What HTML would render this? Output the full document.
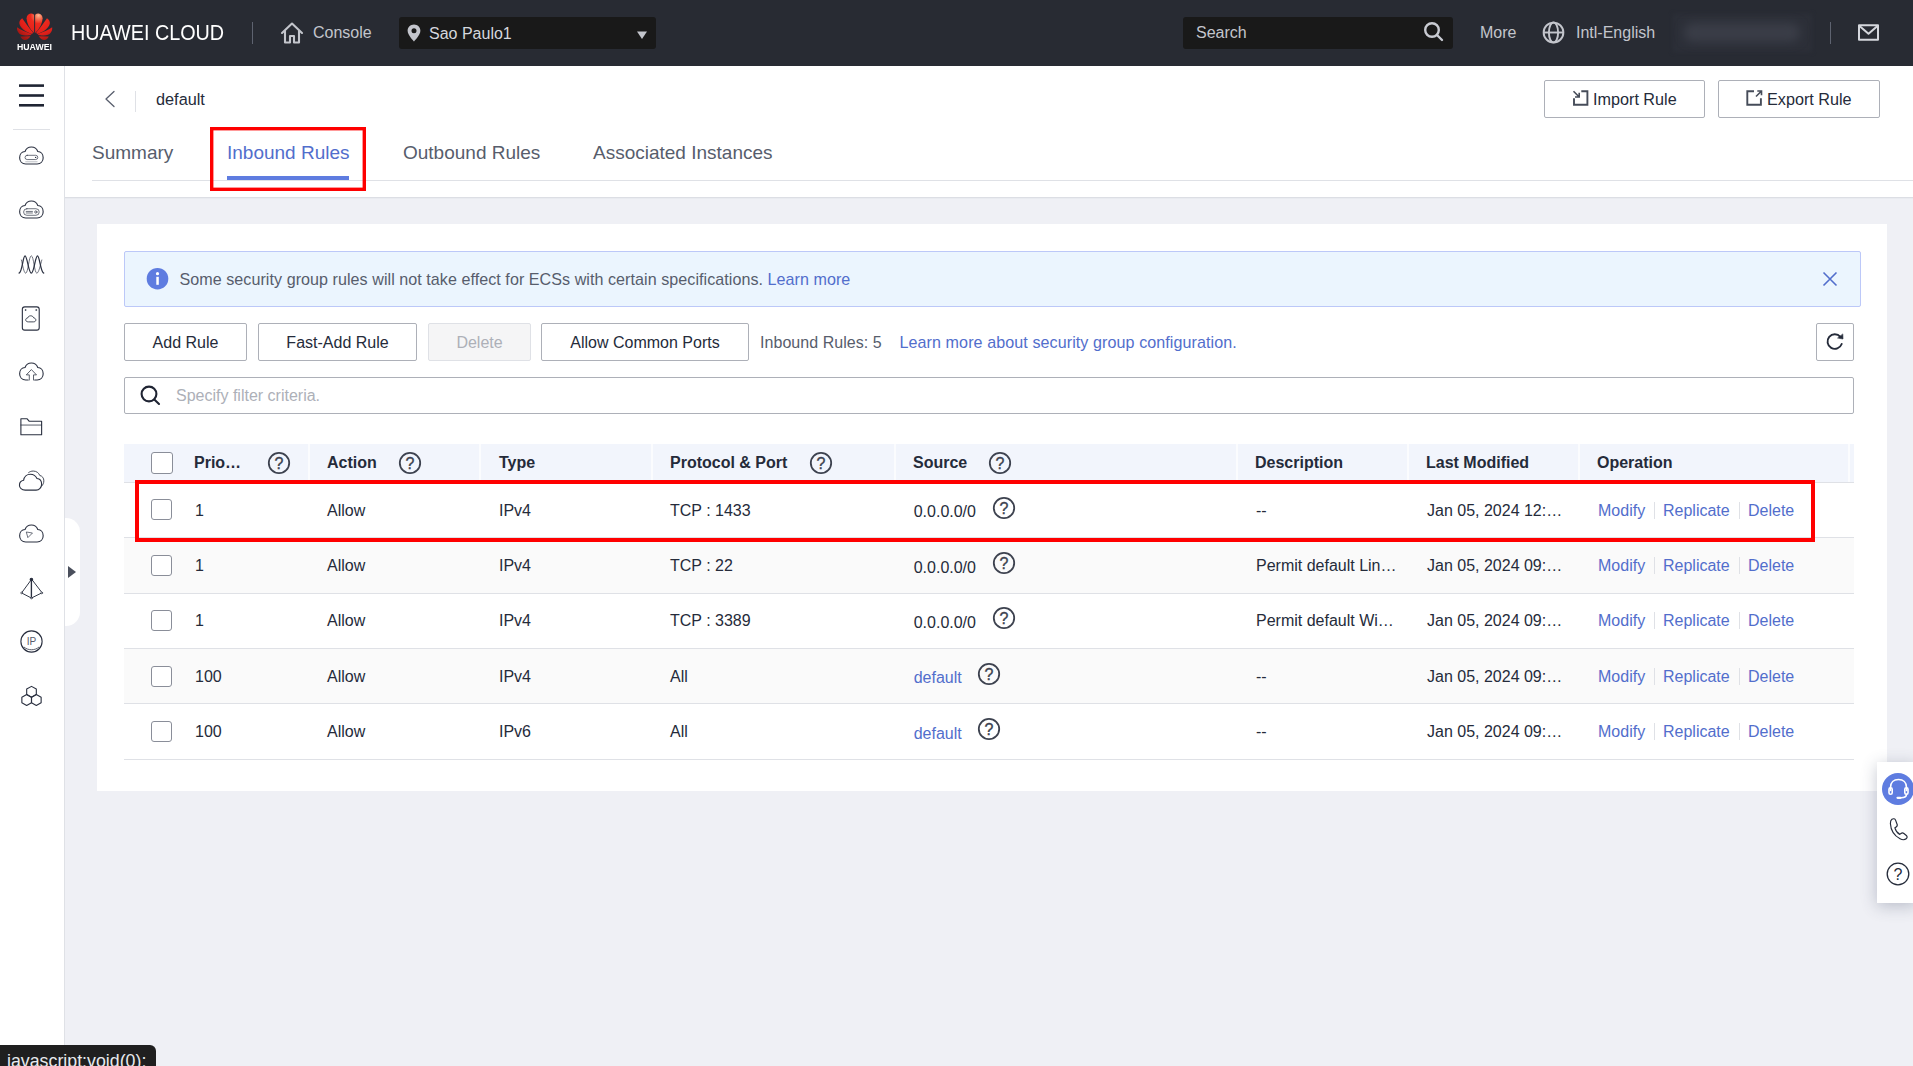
<!DOCTYPE html>
<html lang="en">
<head>
<meta charset="utf-8">
<title>Security Group - Inbound Rules</title>
<style>
*{box-sizing:border-box;margin:0;padding:0}
html,body{width:1913px;height:1066px;overflow:hidden}
body{font-family:"Liberation Sans",Arial,sans-serif;font-size:16px;color:#252b3a;background:#eff0f5;position:relative}
.abs{position:absolute}
.t{position:absolute;white-space:nowrap;line-height:20px}
a{color:#526ecc;text-decoration:none}
/* top bar */
#top{position:absolute;left:0;top:0;width:1913px;height:66px;background:#282b33}
#top .t{color:#c3c5cc}
.darkbox{position:absolute;background:#191919;border-radius:3px}
/* sidebar */
#side{position:absolute;left:0;top:66px;width:65px;height:1000px;background:#fff;border-right:1px solid #dfe1e6}
#side svg{position:absolute;left:17.600px;width:27px;height:27px;fill:none;stroke:#2a3040;stroke-width:1.15;stroke-linecap:round;stroke-linejoin:round}
/* header */
#head{position:absolute;left:65px;top:66px;width:1848px;height:131px;background:#fff;box-shadow:0 1px 0 #dcdee4,0 2px 0 #e9ebf0}
.btn{position:absolute;height:38px;border:1px solid #adb0b8;border-radius:2px;background:#fff;color:#252b3a;font-size:16px;line-height:38px;text-align:center;white-space:nowrap}
.btn.dis{background:#f5f5f6;border-color:#dfe1e6;color:#adb0b8}
.tab{position:absolute;top:142px;font-size:19px;line-height:22px;color:#575d6c;white-space:nowrap}
/* card */
#card{position:absolute;left:97px;top:224px;width:1790px;height:567px;background:#fff}
#alert{position:absolute;left:124px;top:251px;width:1737px;height:56px;background:#ebf5fe;border:1px solid #bcc8f8;border-radius:2px}
/* table */
#thead{position:absolute;left:124px;top:444px;width:1730px;height:38px;background:#f2f5fc}
.th{position:absolute;top:453px;font-weight:bold;color:#252b3a;white-space:nowrap;line-height:20px}
.sep{position:absolute;top:444px;width:2px;height:38px;background:#fbfcfe}
.row{position:absolute;left:124px;width:1730px;border-bottom:1px solid #dfe1e6}
.row.odd{background:#fafafa}
.cb{position:absolute;left:151px;width:22px;height:22px;border:1px solid #8a8e99;border-radius:3px;background:#fff}
.c{position:absolute;white-space:nowrap;line-height:20px;color:#252b3a}
.q{position:absolute;width:24px;height:24px}
.q circle{fill:none;stroke:#3d424f;stroke-width:1.8}
.q text{font-family:"Liberation Sans",Arial,sans-serif;font-size:16px;fill:#3d424f;stroke:#3d424f;stroke-width:0.35;text-anchor:middle}
.vs{position:absolute;width:1px;height:17px;background:#dfe1e6;margin-top:1px}
.redbox{position:absolute;border:3px solid #f00;pointer-events:none}
</style>
</head>
<body>

<!-- TOPBAR -->
<div id="top">
  <!-- Huawei logo -->
  <svg class="abs" style="left:14px;top:10px;width:42px;height:32px" viewBox="14 10 42 32">
    <defs>
      <radialGradient id="hg" gradientUnits="userSpaceOnUse" cx="38.500" cy="15.500" r="27"><stop offset="0" stop-color="#fbb892"/><stop offset="0.120" stop-color="#f67a5a"/><stop offset="0.300" stop-color="#ee2a1e"/><stop offset="0.700" stop-color="#e01f19"/><stop offset="1" stop-color="#9c1713"/></radialGradient>
    </defs>
    <g fill="url(#hg)"><path d="M 34.1 33 L 34.1 15.6 C 34.1 14.3 32.6 13.3 30.7 13.5 C 28.4 13.8 26.6 15.6 26.6 18.2 C 26.8 23.5 30 29.2 34.1 33 Z"/><path d="M 22.2 18.2 C 20 19.6 19 21.6 19.4 23.8 C 20.5 28.6 26 32.2 32.2 33.9 L 33 32.6 C 29 28 25 22.2 22.2 18.2 Z"/><path d="M 17 27.3 C 16.7 30 17.7 32.3 19.6 33.9 C 22 35.4 27 35.6 30.4 35.3 L 31.6 34.1 C 26 32.1 21 29.9 17 27.3 Z"/><path d="M 20.4 36.5 L 30.4 36.2 C 29 38.6 27 39.9 25 40 C 23 40 21.2 38.4 20.4 36.5 Z"/><path d="M 35.10 33 L 35.10 15.6 C 35.10 14.3 36.60 13.3 38.50 13.5 C 40.80 13.8 42.60 15.6 42.60 18.2 C 42.40 23.5 39.20 29.2 35.10 33 Z"/><path d="M 47.00 18.2 C 49.20 19.6 50.20 21.6 49.80 23.8 C 48.70 28.6 43.20 32.2 37.00 33.9 L 36.20 32.6 C 40.20 28 44.20 22.2 47.00 18.2 Z"/><path d="M 52.20 27.3 C 52.50 30 51.50 32.3 49.60 33.9 C 47.20 35.4 42.20 35.6 38.80 35.3 L 37.60 34.1 C 43.20 32.1 48.20 29.9 52.20 27.3 Z"/><path d="M 48.80 36.5 L 38.80 36.2 C 40.20 38.6 42.20 39.9 44.20 40 C 46.20 40 48.00 38.4 48.80 36.5 Z"/></g>
  </svg>
  <div class="t" style="left:17px;top:41px;font-size:9.300px;font-weight:bold;color:#fff;line-height:12px;transform:scaleX(0.940);transform-origin:0 0">HUAWEI</div>
  <div class="t" style="left:71px;top:21px;font-size:19.8px;line-height:24px;color:#fff;transform:scaleY(1.080);transform-origin:0 19px">HUAWEI CLOUD</div>
  <div class="abs" style="left:252px;top:22px;width:1px;height:22px;background:#5e6370"></div>
  <svg class="abs" style="left:280px;top:21px;width:24px;height:24px" viewBox="0 0 24 24" fill="none" stroke="#c3c5cc" stroke-width="2.100" stroke-linejoin="round" stroke-linecap="round"><path d="M2 12 L12 2.500 L22 12"/><path d="M5 10 V21.500 H10 V15 H14 V21.500 H19 V10"/></svg>
  <div class="t" style="left:313px;top:23px">Console</div>
  <div class="darkbox" style="left:399px;top:17px;width:257px;height:32px"></div>
  <svg class="abs" style="left:407px;top:24px;width:14px;height:18px" viewBox="0 0 14 18"><path d="M7 0.500 C3.400 0.500 0.600 3.300 0.600 6.800 C0.600 11 7 17.500 7 17.500 C7 17.500 13.400 11 13.400 6.800 C13.400 3.300 10.600 0.500 7 0.500 Z M7 4.300 A2.500 2.500 0 1 1 7 9.300 A2.500 2.500 0 1 1 7 4.300 Z" fill="#c3c5cc" fill-rule="evenodd"/></svg>
  <div class="t" style="left:429px;top:24px;color:#d5d7dd">Sao Paulo1</div>
  <svg class="abs" style="left:637px;top:30.600px;width:10px;height:8px" viewBox="0 0 10 8"><path d="M0 0.500 H10 L5 8 Z" fill="#c3c5cc"/></svg>

  <div class="darkbox" style="left:1183px;top:17px;width:270px;height:32px"></div>
  <div class="t" style="left:1196px;top:23px">Search</div>
  <svg class="abs" style="left:1423px;top:21px;width:22px;height:22px" viewBox="0 0 22 22" fill="none" stroke="#c9cbd2" stroke-width="2.400" stroke-linecap="round"><circle cx="9" cy="9" r="6.800"/><path d="M14 14 L19 19"/></svg>
  <div class="t" style="left:1480px;top:23px">More</div>
  <svg class="abs" style="left:1542px;top:21px;width:23px;height:23px" viewBox="0 0 24 24" fill="none" stroke="#c3c5cc" stroke-width="2"><circle cx="12" cy="12" r="10.300"/><ellipse cx="12" cy="12" rx="4.800" ry="10.500"/><path d="M1.500 12 H22.500"/></svg>
  <div class="t" style="left:1576px;top:23px">Intl-English</div>
  <div class="abs" style="left:1673px;top:14px;width:139px;height:38px;background:#2c2f38;filter:blur(2px)"></div>
  <div class="abs" style="left:1684px;top:23px;width:116px;height:19px;border-radius:9px;background:#3a3d47;filter:blur(5px)"></div>
  <div class="abs" style="left:1830px;top:22px;width:1px;height:22px;background:#5e6370"></div>
  <svg class="abs" style="left:1857px;top:23px;width:23px;height:19px" viewBox="0 0 23 19" fill="none" stroke="#d5d7dd" stroke-width="2" stroke-linejoin="round"><rect x="2" y="2.200" width="19" height="14.500"/><path d="M2.500 3 L11.500 10.800 L20.500 3"/></svg>
</div>

<!-- SIDEBAR -->
<div id="side">
  <svg style="left:19px;top:17px;width:25px;height:25px;stroke:none" viewBox="0 0 25 25"><rect x="0" y="1.300" width="25" height="2.600" fill="#1f2433"/><rect x="0" y="11.200" width="25" height="2.600" fill="#1f2433"/><rect x="0" y="21" width="25" height="2.600" fill="#1f2433"/></svg>
  <div class="abs" style="left:13px;top:63px;width:37px;height:1px;background:#dfe1e6"></div>
  <!-- ECS -->
  <svg style="top:76px" viewBox="0 0 28 28"><path d="M8 22.800 C4.200 22.800 1.700 20 1.700 16.300 C1.700 12.800 4 10 7.300 9.800 C8.300 7 10.800 5.200 13.900 5.200 C17 5.200 19.500 7 20.500 9.800 C23.800 10 26.100 12.800 26.100 16.300 C26.100 20 23.600 22.800 19.800 22.800 Z"/><rect x="7.300" y="13.800" width="13.200" height="4.400" rx="2.200" stroke-width="0.700"/><circle cx="18.300" cy="16" r="0.700" fill="#252b3a" stroke="none"/><path d="M8 20.500 H19.800" stroke-width="0.600" stroke="#8a8e99"/></svg>
  <!-- BMS -->
  <svg style="top:130px" viewBox="0 0 28 28"><path d="M8 22.800 C4.200 22.800 1.700 20 1.700 16.300 C1.700 12.800 4 10 7.300 9.800 C8.300 7 10.800 5.200 13.900 5.200 C17 5.200 19.500 7 20.500 9.800 C23.800 10 26.100 12.800 26.100 16.300 C26.100 20 23.600 22.800 19.800 22.800 Z"/><rect x="5.800" y="13.200" width="16.200" height="6.800" rx="3.400" stroke-width="0.700"/><path d="M8.500 16 H15 M8.500 17.600 H15" stroke-width="0.700"/><circle cx="18.500" cy="16.600" r="1.200" stroke-width="0.700"/></svg>
  <!-- AS -->
  <svg style="top:184.5px" viewBox="0 0 28 28"><path d="M1.100 23 C4.500 22 5 5 7.300 5 C9.600 5 11 23 13.800 23 C16.600 23 17.900 5 20.200 5 C22.500 5 23.300 22 26.700 23" stroke-width="1.300"/><path d="M3.500 9.300 C4.800 14 6 23 8 23 C10.500 23 11.300 5 13.800 5 C16.300 5 17 23 19.500 23 C21.500 23 23.400 14 24.700 9.300" stroke-width="0.700"/></svg>
  <!-- EVS -->
  <svg style="top:238.5px" viewBox="0 0 28 28"><rect x="4.500" y="2" width="17.500" height="24" rx="2.500"/><circle cx="7.700" cy="5.200" r="0.500" fill="#252b3a" stroke-width="0.600"/><circle cx="18.800" cy="5.200" r="0.500" fill="#252b3a" stroke-width="0.600"/><path d="M10.500 17.500 C8.800 17.500 8 16.500 8 15.400 C8 14.300 8.900 13.500 10 13.500 C10.400 12 11.700 11.200 13.200 11.200 C14.800 11.200 16 12.200 16.400 13.500 C17.600 13.600 18.500 14.400 18.500 15.500 C18.500 16.700 17.600 17.500 16.300 17.500 Z" stroke-width="0.900"/></svg>
  <!-- CBR -->
  <svg style="top:292px" viewBox="0 0 28 28"><path d="M10.500 22.800 H8 C4.200 22.800 1.700 20 1.700 16.300 C1.700 12.800 4 10 7.300 9.800 C8.300 7 10.800 5.200 13.900 5.200 C17 5.200 19.500 7 20.500 9.800 C23.800 10 26.100 12.800 26.100 16.300 C26.100 20 23.600 22.800 19.800 22.800 H17.300"/><path d="M11.700 22.800 V17.500 H8.600 L13.900 12 L19.200 17.500 H16.100 V22.800" stroke-width="0.800"/></svg>
  <!-- OBS -->
  <svg style="top:346.5px" viewBox="0 0 28 28"><path d="M3 6 H9.500 L11.500 8.500 H24.500 V22.500 H3 Z"/><path d="M3 12.500 H24.500" stroke-width="0.800"/></svg>
  <!-- VPC -->
  <svg style="top:400.5px" viewBox="0 0 28 28"><path d="M7.500 24 C3.800 24 1.500 21.500 1.500 18.800 C1.500 16.200 3.300 14.300 5.800 13.800 C6.300 10 9.300 7.500 12.800 7.500 C16 7.500 18.500 9.300 19.700 12 C22.600 12.300 24.500 14.700 24.500 17.800 C24.500 21.300 22 24 18.800 24 Z"/><path d="M11 5.800 C12.300 4.800 13.800 4.200 15.800 4.200 C19 4.200 21.500 6 22.600 8.800 C25.200 9.300 26.800 11.500 26.800 14.300 C26.800 16.500 26 18.300 24.800 19.500" stroke-width="0.900"/></svg>
  <!-- ELB / media -->
  <svg style="top:454px" viewBox="0 0 28 28"><path d="M8 22.800 C4.200 22.800 1.700 20 1.700 16.300 C1.700 12.800 4 10 7.300 9.800 C8.300 7 10.800 5.200 13.900 5.200 C17 5.200 19.500 7 20.500 9.800 C23.800 10 26.100 12.800 26.100 16.300 C26.100 20 23.600 22.800 19.800 22.800 Z"/><path d="M9 12.500 L15 13.500 L10.500 18 Z" stroke-width="0.700"/></svg>
  <!-- pyramid -->
  <svg style="top:508.5px" viewBox="0 0 28 28"><path d="M13.900 4.700 L3.700 18.600 L13.900 23.900 L24.600 18.600 Z" stroke-width="1"/><path d="M13.900 4.700 V23.900" stroke-width="1.400"/><circle cx="13.900" cy="4.700" r="1.300" fill="#252b3a"/><circle cx="3.700" cy="18.600" r="0.900" fill="#fff" stroke-width="0.700"/><circle cx="24.600" cy="18.600" r="0.900" fill="#fff" stroke-width="0.700"/><circle cx="13.900" cy="23.900" r="0.900" fill="#fff" stroke-width="0.700"/></svg>
  <!-- EIP -->
  <svg style="top:561.5px" viewBox="0 0 28 28"><circle cx="14" cy="14" r="11"/><path d="M6.500 20 C10.500 23.500 17.500 23.500 21.500 20" stroke-width="0.800"/><text x="14" y="17.500" text-anchor="middle" font-family="Liberation Sans, Arial, sans-serif" font-size="10.500" fill="#575d6c" stroke="none">IP</text></svg>
  <!-- hexagons -->
  <svg style="top:616.5px" viewBox="0 0 28 28"><path d="M14 3.500 L19 6.300 V12 L14 14.800 L9 12 V6.300 Z"/><path d="M9 12 L14 14.800 V20.500 L9 23.300 L4 20.500 V14.800 Z"/><path d="M19 12 L24 14.800 V20.500 L19 23.300 L14 20.500 V14.800 Z"/></svg>
</div>
<div class="abs" style="left:65px;top:518px;width:15px;height:108px;background:#fff;border-radius:0 14px 14px 0"></div>
<svg class="abs" style="left:68px;top:566px;width:8px;height:12px" viewBox="0 0 8 12"><path d="M0 0 L8 6 L0 12 Z" fill="#4a4f5c"/></svg>

<!-- HEADER -->
<div id="head"></div>
<svg class="abs" style="left:104px;top:90px;width:12px;height:18px" viewBox="0 0 12 18" fill="none" stroke="#575d6c" stroke-width="1.300" stroke-linecap="round" stroke-linejoin="round"><path d="M10 1.500 L2 9 L10 16.500"/></svg>
<div class="abs" style="left:135px;top:91px;width:1px;height:21px;background:#dfe1e6"></div>
<div class="t" style="left:156px;top:89px;font-size:16.300px;color:#252b3a">default</div>
<div class="btn" style="left:1544px;top:80px;width:161px"></div>
<svg class="abs" style="left:1572px;top:90px;width:17px;height:16px" viewBox="0 0 17 16" fill="none" stroke="#464c59" stroke-width="1.900"><path d="M9.300 1.300 H15.400 V14.700 H2 V8.200"/><path d="M1.500 1.300 L7 6.800 M7.200 2.800 V7 H3" stroke-width="1.600"/></svg>
<div class="t" style="left:1593px;top:89px;font-size:16.200px">Import Rule</div>
<div class="btn" style="left:1718px;top:80px;width:162px"></div>
<svg class="abs" style="left:1746px;top:90px;width:17px;height:16px" viewBox="0 0 17 16" fill="none" stroke="#464c59" stroke-width="1.900"><path d="M8 1.300 H1.300 V14.700 H14.900 V8.200"/><path d="M10 6.500 L15.300 1.200 M11.300 1 H15.500 V5.200" stroke-width="1.600"/></svg>
<div class="t" style="left:1767px;top:89px;font-size:16.200px">Export Rule</div>
<div class="abs" style="left:92px;top:180px;width:1821px;height:1px;background:#dfe1e6"></div>
<div class="tab" style="left:92px">Summary</div>
<div class="tab" style="left:227px;color:#526ecc">Inbound Rules</div>
<div class="abs" style="left:227px;top:176px;width:122px;height:4px;background:#5e7ce0"></div>
<div class="tab" style="left:403px">Outbound Rules</div>
<div class="tab" style="left:593px">Associated Instances</div>
<svg class="abs" style="left:210px;top:127px;width:156px;height:64px" viewBox="0 0 156 64"><rect x="1.700" y="1.700" width="152.600" height="60.600" fill="none" stroke="#fe0000" stroke-width="3.400"/></svg>

<!-- CARD -->
<div id="card"></div>
<div id="alert"></div>
<svg class="abs" style="left:146px;top:267.400px;width:23px;height:23px" viewBox="0 0 23 23"><circle cx="11.500" cy="11.700" r="10.800" fill="#5e7ce0"/><rect x="10.300" y="9.800" width="2.500" height="8" fill="#fff"/><circle cx="11.500" cy="6.700" r="1.600" fill="#fff"/></svg>
<div class="t" style="left:179.500px;top:269px;font-size:16.100px;letter-spacing:0.050px;color:#575d6c">Some security group rules will not take effect for ECSs with certain specifications. <a>Learn more</a></div>
<svg class="abs" style="left:1822px;top:271px;width:16px;height:16px" viewBox="0 0 16 16" fill="none" stroke="#526ecc" stroke-width="1.600"><path d="M1.500 1.500 L14.500 14.500 M14.500 1.500 L1.500 14.500"/></svg>

<div class="btn" style="left:124px;top:323px;width:123px">Add Rule</div>
<div class="btn" style="left:258px;top:323px;width:159px">Fast-Add Rule</div>
<div class="btn dis" style="left:428px;top:323px;width:103px">Delete</div>
<div class="btn" style="left:541px;top:323px;width:208px">Allow Common Ports</div>
<div class="t" style="left:760px;top:333px;letter-spacing:0.05px;color:#575d6c">Inbound Rules: 5</div>
<div class="t" style="left:899.500px;top:332px;font-size:16.100px;letter-spacing:0.080px"><a>Learn more about security group configuration.</a></div>
<div class="btn" style="left:1816px;top:323px;width:38px"></div>
<svg class="abs" style="left:1824px;top:331px;width:22px;height:22px" viewBox="0 0 22 22" fill="none" stroke="#252b3a" stroke-width="1.700" stroke-linecap="round"><path d="M16.400 5.800 A7.300 7.300 0 1 0 17.700 13" stroke-width="1.900"/><path d="M18.800 3.300 L19 8 L13.900 7.100 Z" fill="#252b3a" stroke-width="0.600" stroke-linejoin="round"/></svg>

<div class="abs" style="left:124px;top:377px;width:1730px;height:37px;border:1px solid #adb0b8;border-radius:2px;background:#fff"></div>
<svg class="abs" style="left:139px;top:384px;width:23px;height:22px" viewBox="0 0 23 22" fill="none" stroke="#1f2433" stroke-width="2.100" stroke-linecap="round"><circle cx="10" cy="10" r="7.400"/><path d="M15.300 15.500 L20 20"/></svg>
<div class="t" style="left:176px;top:386px;color:#adb0b8">Specify filter criteria.</div>

<!-- TABLE -->
<div id="thead"></div>
<div class="abs" style="left:124px;top:482px;width:1730px;height:1px;background:#dfe1e6"></div>
<div class="sep" style="left:308px"></div>
<div class="sep" style="left:479px"></div>
<div class="sep" style="left:651px"></div>
<div class="sep" style="left:894px"></div>
<div class="sep" style="left:1236px"></div>
<div class="sep" style="left:1407px"></div>
<div class="sep" style="left:1578px"></div>
<div class="sep" style="left:1848px"></div>
<div class="cb" style="top:452px"></div>
<div class="th" style="left:194px">Prio…</div>
<div class="th" style="left:327px">Action</div>
<div class="th" style="left:499px">Type</div>
<div class="th" style="left:670px">Protocol &amp; Port</div>
<div class="th" style="left:913px">Source</div>
<div class="th" style="left:1255px">Description</div>
<div class="th" style="left:1426px">Last Modified</div>
<div class="th" style="left:1597px">Operation</div>
<svg class="q" style="left:266.5px;top:450.5px" viewBox="0 0 24 24"><circle cx="12" cy="12" r="10.200"/><text x="12" y="17.700">?</text></svg>
<svg class="q" style="left:397.5px;top:450.5px" viewBox="0 0 24 24"><circle cx="12" cy="12" r="10.200"/><text x="12" y="17.700">?</text></svg>
<svg class="q" style="left:809px;top:450.5px" viewBox="0 0 24 24"><circle cx="12" cy="12" r="10.200"/><text x="12" y="17.700">?</text></svg>
<svg class="q" style="left:988px;top:450.5px" viewBox="0 0 24 24"><circle cx="12" cy="12" r="10.200"/><text x="12" y="17.700">?</text></svg>
<div class="row" style="top:483px;height:55px"></div>
<div class="cb" style="top:499px;width:21px;height:21px"></div>
<div class="c" style="left:195px;top:501px">1</div>
<div class="c" style="left:327px;top:501px">Allow</div>
<div class="c" style="left:499px;top:501px">IPv4</div>
<div class="c" style="left:670px;top:501px">TCP : 1433</div>
<div class="c" style="left:913.700px;top:502px">0.0.0.0/0</div>
<svg class="q" style="left:992px;top:495.500px" viewBox="0 0 24 24"><circle cx="12" cy="12" r="10.200"/><text x="12" y="17.700">?</text></svg>
<div class="c" style="left:1256px;top:501px">--</div>
<div class="c" style="left:1427px;top:501px">Jan 05, 2024 12:…</div>
<div class="c" style="left:1598px;top:501px"><a>Modify</a></div>
<div class="vs" style="left:1654px;top:501px"></div>
<div class="c" style="left:1663px;top:501px"><a>Replicate</a></div>
<div class="vs" style="left:1739px;top:501px"></div>
<div class="c" style="left:1748px;top:501px"><a>Delete</a></div>
<div class="row odd" style="top:538px;height:56px"></div>
<div class="cb" style="top:555px;width:21px;height:21px"></div>
<div class="c" style="left:195px;top:556px">1</div>
<div class="c" style="left:327px;top:556px">Allow</div>
<div class="c" style="left:499px;top:556px">IPv4</div>
<div class="c" style="left:670px;top:556px">TCP : 22</div>
<div class="c" style="left:913.700px;top:558px">0.0.0.0/0</div>
<svg class="q" style="left:992px;top:551px" viewBox="0 0 24 24"><circle cx="12" cy="12" r="10.200"/><text x="12" y="17.700">?</text></svg>
<div class="c" style="left:1256px;top:556px">Permit default Lin…</div>
<div class="c" style="left:1427px;top:556px">Jan 05, 2024 09:…</div>
<div class="c" style="left:1598px;top:556px"><a>Modify</a></div>
<div class="vs" style="left:1654px;top:556px"></div>
<div class="c" style="left:1663px;top:556px"><a>Replicate</a></div>
<div class="vs" style="left:1739px;top:556px"></div>
<div class="c" style="left:1748px;top:556px"><a>Delete</a></div>
<div class="row" style="top:594px;height:55px"></div>
<div class="cb" style="top:610px;width:21px;height:21px"></div>
<div class="c" style="left:195px;top:611px">1</div>
<div class="c" style="left:327px;top:611px">Allow</div>
<div class="c" style="left:499px;top:611px">IPv4</div>
<div class="c" style="left:670px;top:611px">TCP : 3389</div>
<div class="c" style="left:913.700px;top:613px">0.0.0.0/0</div>
<svg class="q" style="left:992px;top:606px" viewBox="0 0 24 24"><circle cx="12" cy="12" r="10.200"/><text x="12" y="17.700">?</text></svg>
<div class="c" style="left:1256px;top:611px">Permit default Wi…</div>
<div class="c" style="left:1427px;top:611px">Jan 05, 2024 09:…</div>
<div class="c" style="left:1598px;top:611px"><a>Modify</a></div>
<div class="vs" style="left:1654px;top:611px"></div>
<div class="c" style="left:1663px;top:611px"><a>Replicate</a></div>
<div class="vs" style="left:1739px;top:611px"></div>
<div class="c" style="left:1748px;top:611px"><a>Delete</a></div>
<div class="row odd" style="top:649px;height:55px"></div>
<div class="cb" style="top:666px;width:21px;height:21px"></div>
<div class="c" style="left:195px;top:667px">100</div>
<div class="c" style="left:327px;top:667px">Allow</div>
<div class="c" style="left:499px;top:667px">IPv4</div>
<div class="c" style="left:670px;top:667px">All</div>
<div class="c" style="left:913.700px;top:668px"><a>default</a></div>
<svg class="q" style="left:977.300px;top:661.500px" viewBox="0 0 24 24"><circle cx="12" cy="12" r="10.200"/><text x="12" y="17.700">?</text></svg>
<div class="c" style="left:1256px;top:667px">--</div>
<div class="c" style="left:1427px;top:667px">Jan 05, 2024 09:…</div>
<div class="c" style="left:1598px;top:667px"><a>Modify</a></div>
<div class="vs" style="left:1654px;top:667px"></div>
<div class="c" style="left:1663px;top:667px"><a>Replicate</a></div>
<div class="vs" style="left:1739px;top:667px"></div>
<div class="c" style="left:1748px;top:667px"><a>Delete</a></div>
<div class="row" style="top:704px;height:56px"></div>
<div class="cb" style="top:721px;width:21px;height:21px"></div>
<div class="c" style="left:195px;top:722px">100</div>
<div class="c" style="left:327px;top:722px">Allow</div>
<div class="c" style="left:499px;top:722px">IPv6</div>
<div class="c" style="left:670px;top:722px">All</div>
<div class="c" style="left:913.700px;top:724px"><a>default</a></div>
<svg class="q" style="left:977.300px;top:717px" viewBox="0 0 24 24"><circle cx="12" cy="12" r="10.200"/><text x="12" y="17.700">?</text></svg>
<div class="c" style="left:1256px;top:722px">--</div>
<div class="c" style="left:1427px;top:722px">Jan 05, 2024 09:…</div>
<div class="c" style="left:1598px;top:722px"><a>Modify</a></div>
<div class="vs" style="left:1654px;top:722px"></div>
<div class="c" style="left:1663px;top:722px"><a>Replicate</a></div>
<div class="vs" style="left:1739px;top:722px"></div>
<div class="c" style="left:1748px;top:722px"><a>Delete</a></div>
<div class="redbox" style="left:135px;top:480px;width:1680px;height:62px;border-width:4px"></div>

<!-- FLOATERS -->
<div class="abs" style="left:1877px;top:762px;width:40px;height:141px;background:#fff;box-shadow:0 3px 16px rgba(60,70,100,.30)"></div>
<svg class="abs" style="left:1882px;top:773px;width:32px;height:32px" viewBox="0 0 32 32"><circle cx="16" cy="16" r="16" fill="#5e7ce0"/><g fill="none" stroke="#fff" stroke-width="1.600" stroke-linecap="round"><path d="M8.500 17.500 V14.500 C8.500 9.500 11.800 6.500 16.500 6.500 C21.200 6.500 24.500 9.500 24.500 14.500 V17.500"/><rect x="7" y="14.800" width="3.200" height="6.500" rx="1.500"/><rect x="22.800" y="14.800" width="3.200" height="6.500" rx="1.500"/><path d="M24.500 21.300 C24.500 23.800 22.500 24.800 19 24.800"/><path d="M15.500 24.800 H18.500" stroke-width="2.200"/></g></svg>
<svg class="abs" style="left:1887px;top:816.500px;width:21.600px;height:24.300px" viewBox="0 0 24 27" fill="none" stroke="#252b3a" stroke-width="1.300" stroke-linejoin="round"><path d="M5.500 2.500 C7 1.500 8.800 1.800 9.500 3.500 L11.200 8 C11.700 9.300 11.200 10.300 10.200 11 L8.800 12 C9.500 15 11.500 17.800 14.200 19.300 L15.500 18.300 C16.500 17.500 17.800 17.500 18.800 18.300 L21.500 20.500 C22.800 21.600 22.500 23.300 21.300 24.200 C19.500 25.600 17 25.500 14.500 24.200 C8.500 21 4.200 14.500 3.800 7.500 C3.700 5.300 4.200 3.400 5.500 2.500 Z"/></svg>
<svg class="abs" style="left:1886.300px;top:861.500px;width:24px;height:24px" viewBox="0 0 24 24"><circle cx="12" cy="12" r="10.800" fill="none" stroke="#252b3a" stroke-width="1.300"/><text x="12" y="17.800" text-anchor="middle" font-family="Liberation Sans, Arial, sans-serif" font-size="16" fill="#252b3a">?</text></svg>

<div class="abs" style="left:0;top:1045px;width:156px;height:30px;background:#1f1f1f;border-radius:0 6px 0 0"></div>
<div class="t" style="left:7px;top:1051px;font-size:17.8px;color:#e8eaed;line-height:20px">javascript:void(0);</div>

</body>
</html>
